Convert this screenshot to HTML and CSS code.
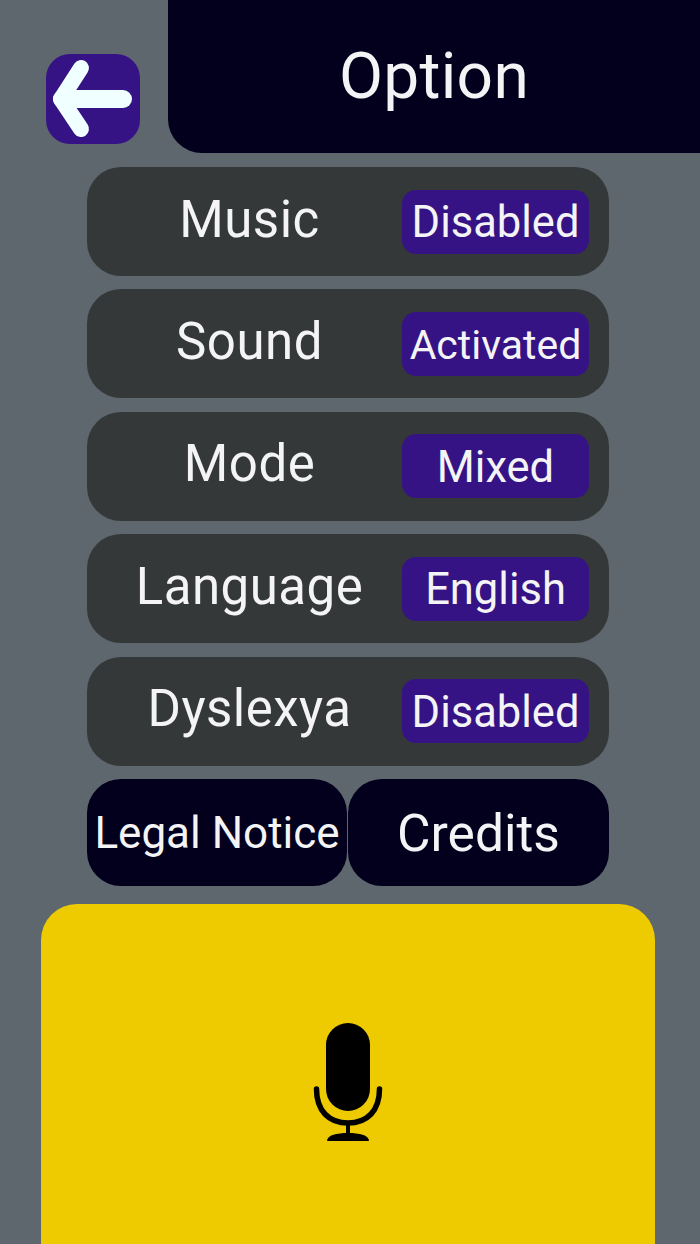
FILE: index.html
```html
<!DOCTYPE html>
<html lang="en">
  <head>
    <meta charset="UTF-8" />
    <meta name="viewport" content="width=device-width, initial-scale=1.0" />
    <title>Option</title>
    <link rel="stylesheet" href="styles.css">
  </head>
  <body>
    <div class="top">
      <button class="back" aria-label="Back">
        <svg width="94" height="90" viewBox="0 0 94 90">
          <path d="M35 14 L15 45 L35 75" fill="none" stroke="#f0ffff" stroke-width="16" stroke-linecap="round" stroke-linejoin="round" />
          <path d="M16 45 H77" fill="none" stroke="#f0ffff" stroke-width="18" stroke-linecap="round" />
        </svg>
      </button>
      <h1 class="title">Option</h1>
    </div>

    <div class="options">
      <div class="row">
        <span class="label">Music</span>
        <span class="badge">Disabled</span>
      </div>
      <div class="row">
        <span class="label">Sound</span>
        <span class="badge badge-small">Activated</span>
      </div>
      <div class="row">
        <span class="label">Mode</span>
        <span class="badge">Mixed</span>
      </div>
      <div class="row">
        <span class="label">Language</span>
        <span class="badge">English</span>
      </div>
      <div class="row">
        <span class="label">Dyslexya</span>
        <span class="badge">Disabled</span>
      </div>
      <div class="links">
        <button class="link link-small">Legal Notice</button>
        <button class="link">Credits</button>
      </div>
    </div>

    <div class="mic-panel">
      <svg width="70" height="118" viewBox="0 0 70 118">
        <rect x="13" y="0" width="44" height="88" rx="22" fill="#000" />
        <path d="M3.5 66 C3.5 88 16 100 35 100 C54 100 66.500 88 66.500 66" fill="none" stroke="#000" stroke-width="5.500" stroke-linecap="round" />
        <rect x="33" y="100" width="4" height="12" fill="#000" />
        <path d="M14 118 C14 112 24 110 35 110 C46 110 56 112 56 118 Z" fill="#000" />
      </svg>
    </div>
  </body>
</html>
```

FILE: styles.css
```css
html,
body {
  margin: 0;
  height: 100%;
}
body {
  height: 1244px;
  overflow: hidden;
  background-color: #5f676e;
  font-family: Roboto, "Liberation Sans", sans-serif;
  color: #f4f4f6;
  display: flex;
  flex-direction: column;
}
button {
  font-family: inherit;
  color: inherit;
  border: none;
  padding: 0;
}

.top {
  display: flex;
  align-items: flex-start;
  padding-left: 46px;
  gap: 28px;
  height: 153px;
}
.back {
  width: 94px;
  height: 90px;
  margin-top: 54px;
  border-radius: 24px;
  background-color: #351385;
  display: flex;
  align-items: center;
  justify-content: center;
}
.title {
  flex: 1;
  height: 153px;
  margin: 0;
  box-sizing: border-box;
  padding-bottom: 1px;
  background-color: #02001c;
  border-bottom-left-radius: 34px;
  font-size: 64px;
  font-weight: 400;
  letter-spacing: 0.3px;
  display: flex;
  align-items: center;
  justify-content: center;
}

.options {
  margin: 14px 91px 0 87px;
  display: flex;
  flex-direction: column;
  gap: 13.4px;
}
.row {
  height: 109px;
  box-sizing: border-box;
  padding: 0 20px 0 0;
  border-radius: 34px;
  background-color: #353839;
  display: flex;
  align-items: center;
}
.label {
  flex: 1;
  text-align: center;
  font-size: 51px;
  letter-spacing: 0.5px;
  padding-bottom: 5px;
  padding-left: 10px;
}
.badge {
  width: 187px;
  height: 64px;
  box-sizing: border-box;
  padding-top: 2px;
  border-radius: 14px;
  background-color: #351385;
  font-size: 43.5px;
  display: flex;
  align-items: center;
  justify-content: center;
}
.badge-small {
  font-size: 41px;
}

.links {
  display: flex;
  height: 107px;
  gap: 1px;
}
.link {
  flex: 1;
  padding-top: 2px;
  border-radius: 34px;
  background-color: #02001c;
  font-size: 51.5px;
}
.link-small {
  flex: 0 0 260px;
  font-size: 44px;
  white-space: nowrap;
}

.mic-panel {
  flex: 1;
  margin: 18px 45px 0 41px;
  border-radius: 36px 36px 0 0;
  background-color: #edcb00;
  display: flex;
  justify-content: center;
  align-items: flex-start;
  padding-top: 119px;
}
```
